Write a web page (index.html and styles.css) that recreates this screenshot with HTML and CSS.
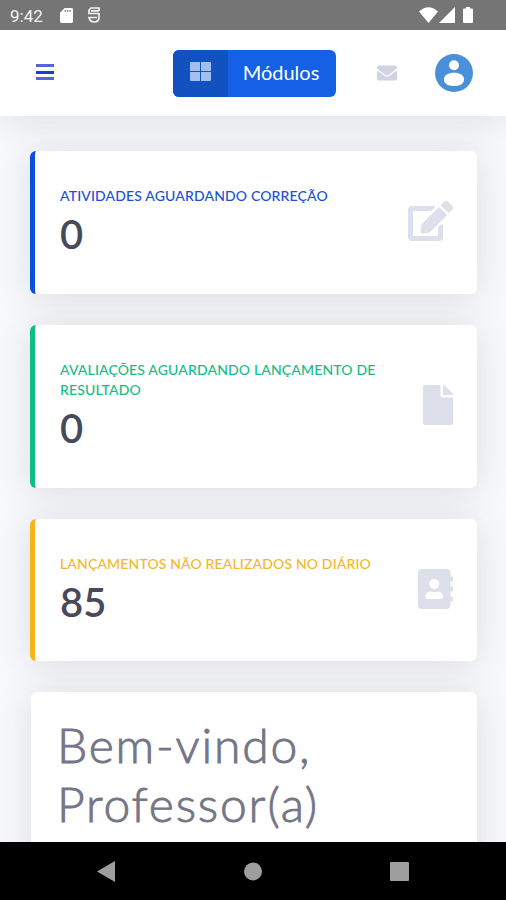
FILE: index.html
```html
<!DOCTYPE html>
<html lang="pt-BR">
<head>
    <meta charset="UTF-8">
    <meta name="viewport" content="width=device-width, initial-scale=1.0">
    <title>Portal do Professor</title>
    <link rel="stylesheet" href="styles.css">
</head>
<body>
    <div class="statusbar">
        <span class="clock">9:42</span>
        <svg class="sd-icon" width="13" height="15" viewBox="0 0 14 16"><path fill="#fff" fill-rule="evenodd" d="M5 0h7.500Q14 0 14 1.500V14.500Q14 16 12.500 16h-11Q0 16 0 14.500V5zM5 2v2h1.300V2zM7.600 2v2h1.300V2zM10.200 2v2h1.300V2z"/></svg>
        <svg class="app-icon" width="12" height="16" viewBox="0 0 12 16"><path fill="none" stroke="#f2f2f2" stroke-width="1.700" d="M11 4V1H3L1 3v3.500h10V10q0 5-5 5-4 0-5-4.500h8M3 3.800h8"/></svg>
        <div class="signals">
            <svg width="19" height="16" viewBox="0 0 19 16"><path fill="#fff" d="M0 4.500Q9.500-4 19 4.500L9.500 16z"/></svg>
            <svg width="16" height="16" viewBox="0 0 16 16"><path fill="#fff" d="M16 0v16H0z"/></svg>
            <svg class="battery" width="10" height="16" viewBox="0 0 10 16"><path fill="#fff" d="M3 0h4v1.500h2q1 0 1 1V15q0 1-1 1H1q-1 0-1-1V2.500q0-1 1-1h2z"/></svg>
        </div>
    </div>

    <header class="topbar">
        <button class="menu" aria-label="Menu">
            <span></span>
            <span></span>
            <span></span>
        </button>
        <a class="btn-modulos" href="#">
            <span class="btn-icon">
                <svg width="21" height="19" viewBox="0 0 21 19"><path fill="#a3bfee" d="M1 0h9v9H0V1q0-1 1-1zM11 0h9q1 0 1 1v8H11zM0 10h10v9H1q-1 0-1-1zM11 10h10v8q0 1-1 1h-9z"/></svg>
            </span>
            <span class="btn-text">Módulos</span>
        </a>
        <a class="mail" href="#" aria-label="Mensagens">
            <svg width="20" height="20" viewBox="0 0 512 512"><path fill="#d1d3e2" d="M502.300 190.800c3.900-3.100 9.700-.2 9.700 4.700V400c0 26.500-21.500 48-48 48H48c-26.500 0-48-21.500-48-48V195.600c0-5 5.700-7.800 9.700-4.700 22.400 17.400 52.100 39.500 154.100 113.600 21.100 15.400 56.700 47.800 92.200 47.600 35.700.3 72-32.800 92.300-47.600 102-74.100 131.600-96.300 154-113.700zM256 320c23.200.4 56.600-29.200 73.400-41.400 132.700-96.300 142.800-104.700 173.400-128.700 5.800-4.500 9.200-11.500 9.200-18.900v-19c0-26.500-21.500-48-48-48H48c-26.500 0-48 21.500-48 48v19c0 7.400 3.400 14.300 9.200 18.900 30.600 23.900 40.700 32.400 173.400 128.700 16.800 12.200 50.200 41.800 73.400 41.400z"/></svg>
        </a>
        <a class="avatar" href="#" aria-label="Perfil">
            <svg width="38" height="38" viewBox="0 0 38 38"><circle cx="19" cy="19" r="19" fill="#4a90d9"/><circle cx="19" cy="11.300" r="5" fill="#fff"/><path fill="#fff" d="M9 25.500C9 21 13.500 18.800 19 18.800S29 21 29 25.500 24.500 32 19 32 9 30 9 25.500z"/></svg>
        </a>
    </header>

    <main class="content">
        <div class="card card-primary">
            <div class="card-info">
                <div class="label">Atividades aguardando correção</div>
                <div class="number">0</div>
            </div>
            <svg class="card-icon" width="45" height="40" viewBox="0 0 576 512"><path d="M402.600 83.200l90.200 90.200c3.800 3.800 3.800 10 0 13.800L274.400 405.600l-92.800 10.300c-12.400 1.400-22.900-9.100-21.500-21.500l10.300-92.800L388.800 83.200c3.800-3.800 10-3.800 13.800 0zm162-22.900l-48.800-48.800c-15.200-15.200-39.900-15.200-55.200 0l-35.400 35.400c-3.800 3.800-3.800 10 0 13.800l90.200 90.200c3.800 3.800 10 3.800 13.800 0l35.400-35.400c15.200-15.300 15.200-40 0-55.200zM384 346.200V448H64V128h229.800c3.200 0 6.200-1.300 8.500-3.500l40-40c7.600-7.600 2.200-20.500-8.500-20.500H48C21.500 64 0 85.500 0 112v352c0 26.500 21.500 48 48 48h352c26.500 0 48-21.500 48-48V306.200c0-10.700-12.900-16-20.500-8.500l-40 40c-2.200 2.300-3.500 5.300-3.500 8.500z"/></svg>
        </div>

        <div class="card card-success">
            <div class="card-info">
                <div class="label">Avaliações aguardando lançamento de resultado</div>
                <div class="number">0</div>
            </div>
            <svg class="card-icon" width="30" height="40" viewBox="0 0 384 512"><path d="M224 136V0H24C10.700 0 0 10.700 0 24v464c0 13.300 10.700 24 24 24h336c13.300 0 24-10.700 24-24V160H248c-13.200 0-24-10.800-24-24zm160-14.100v6.100H256V0h6.100c6.400 0 12.500 2.500 17 7l97.900 98c4.500 4.500 7 10.600 7 16.900z"/></svg>
        </div>

        <div class="card card-warning">
            <div class="card-info">
                <div class="label">Lançamentos não realizados no diário</div>
                <div class="number">85</div>
            </div>
            <svg class="card-icon" width="35" height="40" viewBox="0 0 448 512"><path d="M436 160c6.600 0 12-5.400 12-12v-40c0-6.600-5.400-12-12-12h-20V48c0-26.500-21.500-48-48-48H48C21.500 0 0 21.500 0 48v416c0 26.500 21.500 48 48 48h320c26.500 0 48-21.500 48-48v-48h20c6.600 0 12-5.400 12-12v-40c0-6.600-5.400-12-12-12h-20v-64h20c6.600 0 12-5.400 12-12v-40c0-6.600-5.400-12-12-12h-20v-64h20zm-228-32c35.300 0 64 28.700 64 64s-28.700 64-64 64-64-28.700-64-64 28.700-64 64-64zm112 236.800c0 10.600-10 19.200-22.400 19.200H118.400C106 384 96 375.400 96 364.800v-19.200c0-31.800 30.100-57.600 67.200-57.600h5c12.300 5.100 25.700 8 39.800 8s27.600-2.900 39.800-8h5c37.100 0 67.200 25.800 67.200 57.600v19.200z"/></svg>
        </div>

        <div class="welcome">
            <h1>Bem-vindo, Professor(a)</h1>
        </div>
    </main>

    <nav class="navbar">
        <svg width="18" height="21" viewBox="0 0 18 21"><path fill="#9e9e9e" d="M18 0v21L0 10.500z"/></svg>
        <svg width="18" height="19" viewBox="0 0 18 19"><circle cx="9" cy="9.500" r="9" fill="#9e9e9e"/></svg>
        <svg width="19" height="19" viewBox="0 0 19 19"><rect width="19" height="19" rx="1" fill="#9e9e9e"/></svg>
    </nav>
</body>
</html>
```
FILE: styles.css
```css
* {
    box-sizing: border-box;
}

body {
    font-family: Lato, "Open Sans", sans-serif;
    background-color: #f8f9fc;
    margin: 0;
    height: 900px;
    display: flex;
    flex-direction: column;
    overflow: hidden;
}

svg {
    display: block;
    flex-shrink: 0;
}

a {
    text-decoration: none;
}

/* Barra de status */
.statusbar {
    height: 30px;
    flex-shrink: 0;
    background-color: #757575;
    display: flex;
    align-items: center;
    padding: 0 33px 0 10px;
    position: relative;
    z-index: 2;
}

.clock {
    width: 50px;
    font-family: Roboto, sans-serif;
    font-size: 17px;
    line-height: 30px;
    padding-top: 2px;
    color: #f2f2f2;
}

.app-icon {
    margin-left: 15px;
}

.signals {
    display: flex;
    gap: 1px;
    margin-left: auto;
}

.battery {
    margin-left: 7px;
}

/* Topo */
.topbar {
    height: 86px;
    flex-shrink: 0;
    background-color: #fff;
    display: flex;
    align-items: center;
    padding: 0 33px 0 36px;
    box-shadow: 0 3px 37px rgba(58, 62, 65, 0.15);
    position: relative;
    z-index: 1;
}

.menu {
    width: 18px;
    padding: 0;
    border: none;
    background: none;
    display: flex;
    flex-direction: column;
    gap: 3.500px;
    margin-bottom: 2px;
}

.menu span {
    height: 3px;
    background-color: #5068d8;
}

.menu span:nth-child(2) {
    background-color: #1c3fc8;
}

.btn-modulos {
    width: 163px;
    height: 47px;
    margin-left: 119px;
    display: flex;
    border-radius: 6px;
    overflow: hidden;
    background-color: #1560e4;
    color: #fff;
}

.btn-icon {
    width: 55px;
    display: flex;
    align-items: center;
    justify-content: center;
    background-color: #1252c0;
    padding-bottom: 4px;
}

.btn-text {
    flex: 1;
    text-align: center;
    font-size: 20px;
    line-height: 45px;
    padding-right: 2px;
}

.mail {
    margin-left: 41px;
}

.avatar {
    margin-left: auto;
}

/* Cartões */
.content {
    flex: 1;
    min-height: 0;
    overflow: hidden;
    padding: 35px 29px 0 30px;
    display: flex;
    flex-direction: column;
    gap: 31px;
}

.card,
.welcome {
    flex-shrink: 0;
    background-color: #fff;
    border-radius: 6px;
    box-shadow: 0 3px 37px rgba(58, 62, 65, 0.15);
}

.card {
    display: flex;
    align-items: center;
    justify-content: space-between;
    padding: 35px 24px 34px 25px;
    border-left: 5px solid;
}

.card-primary {
    border-color: #0a4fdc;
    color: #1a50d8;
}

.card-success {
    border-color: #0dbf83;
    color: #14bd86;
}

.card-warning {
    border-color: #f4b619;
    color: #f4b72c;
}

.label {
    max-width: 330px;
    font-size: 14px;
    font-weight: 500;
    line-height: 20.500px;
    letter-spacing: 0.150px;
    text-transform: uppercase;
}

.number {
    font-size: 40px;
    font-weight: 600;
    line-height: 48px;
    margin: 3.500px 0 1.500px;
    color: #484a5b;
}

.card-icon {
    fill: #dddfeb;
    margin-bottom: 3px;
}

.welcome {
    height: 240px;
    padding: 23px 26px;
    margin-left: 1px;
}

h1 {
    margin: 0;
    font-size: 48px;
    font-weight: 300;
    line-height: 59px;
    letter-spacing: 1.800px;
    color: #747687;
    -webkit-text-stroke: 0.9px #747687;
}

/* Navegação do sistema */
.navbar {
    height: 58px;
    flex-shrink: 0;
    background-color: #000;
    display: flex;
    justify-content: space-between;
    align-items: center;
    padding: 0 97px;
    position: relative;
    z-index: 1;
}
```
